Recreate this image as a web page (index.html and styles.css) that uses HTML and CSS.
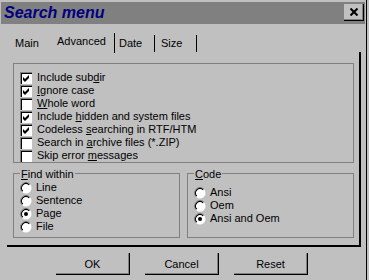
FILE: index.html
```html
<!DOCTYPE html>
<html lang="en">
<head>
    <meta charset="UTF-8">
    <title>Search menu</title>
    <link rel="stylesheet" href="styles.css">
</head>
<body>
    <div class="window">
        <div class="titlebar">
            <span class="title">Search menu</span>
            <span class="close">
                <svg width="8" height="8" viewBox="0 0 8 8"><path d="M0.5 0.5 L7.5 7.5 M7.5 0.5 L0.5 7.5" stroke="#000" stroke-width="2"/></svg>
            </span>
        </div>

        <div class="tabs">
            <span class="tab">Main</span>
            <span class="tab active">Advanced</span>
            <span class="tab">Date</span>
            <span class="tab">Size</span>
        </div>

        <div class="page">
            <div class="group options">
                <label class="check on"><span class="box"></span><span>Include sub<u>d</u>ir</span></label>
                <label class="check on"><span class="box"></span><span><u>I</u>gnore case</span></label>
                <label class="check"><span class="box"></span><span><u>W</u>hole word</span></label>
                <label class="check on"><span class="box"></span><span>Include <u>h</u>idden and system files</span></label>
                <label class="check on"><span class="box"></span><span>Codeless <u>s</u>earching in RTF/HTM</span></label>
                <label class="check"><span class="box"></span><span>Search in <u>a</u>rchive files (*.ZIP)</span></label>
                <label class="check"><span class="box"></span><span>Skip error <u>m</u>essages</span></label>
            </div>

            <div class="group-row">
                <fieldset class="radio-group find">
                    <legend><u>F</u>ind within</legend>
                    <label class="radio"><span class="dot"></span><span>Line</span></label>
                    <label class="radio"><span class="dot"></span><span>Sentence</span></label>
                    <label class="radio on"><span class="dot"></span><span>Page</span></label>
                    <label class="radio"><span class="dot"></span><span>File</span></label>
                </fieldset>
                <fieldset class="radio-group code">
                    <legend><u>C</u>ode</legend>
                    <label class="radio"><span class="dot"></span><span>Ansi</span></label>
                    <label class="radio"><span class="dot"></span><span>Oem</span></label>
                    <label class="radio on"><span class="dot"></span><span>Ansi and Oem</span></label>
                </fieldset>
            </div>
        </div>

        <div class="buttons">
            <button>OK</button>
            <button>Cancel</button>
            <button>Reset</button>
        </div>
    </div>

    <script>
        // draw the check marks and radio circles once
        var tick = '<svg width="12" height="12" viewBox="0 0 12 12"><polygon points="2,4 4,6 8,2 8,5 4,9 2,7" fill="#000"/></svg>';
        document.querySelectorAll('.check.on .box').forEach(function (el) {
            el.innerHTML = tick;
        });

        document.querySelectorAll('.radio .dot').forEach(function (el) {
            var on = el.parentNode.classList.contains('on');
            el.innerHTML =
                '<svg width="12" height="12" viewBox="0 0 12 12">' +
                '<circle cx="6" cy="6" r="5.5" fill="#fff"/>' +
                '<path d="M2.1 9.9 A5.5 5.5 0 0 1 9.9 2.1" fill="none" stroke="#808080" stroke-width="1"/>' +
                '<path d="M2.8 9.2 A4.5 4.5 0 0 1 9.2 2.8" fill="none" stroke="#000" stroke-width="1.2"/>' +
                (on ? '<circle cx="6" cy="6" r="2" fill="#000"/>' : '') +
                '</svg>';
        });
    </script>
</body>
</html>
```

FILE: styles.css
```css
* {
    box-sizing: border-box;
}
body {
    margin: 0;
    background: #c0c0c0;
    font-family: "Liberation Sans", Arial, sans-serif;
    font-size: 11px;
    color: #000;
}
.window {
    width: 367px;
    height: 280px;
    padding: 2px 1px 0 1px;
    border-right: 1px solid #000;
}
.titlebar {
    display: flex;
    justify-content: space-between;
    align-items: flex-start;
    width: 364px;
    height: 22px;
    background: #808080;
}
.title {
    padding-left: 3px;
    line-height: 22px;
    font-size: 16px;
    font-weight: bold;
    font-style: italic;
    color: #000080;
}
.close {
    display: flex;
    align-items: center;
    justify-content: center;
    width: 20px;
    height: 17px;
    margin: 2px 1px 0 0;
    border-right: 1px solid #000;
    border-bottom: 1px solid #000;
    box-shadow: inset -1px -1px 0 #808080;
    background: #c0c0c0;
}

.tabs {
    display: flex;
    align-items: flex-end;
    height: 28px;
    padding-left: 8px;
}
.tab {
    min-width: 42px;
    height: 17px;
    padding: 2px 6px 0;
    line-height: 13px;
    border-right: 1px solid #000;
}
.tab.active {
    height: 20px;
    margin: 0 -2px -1px;
    padding: 2px 8px 0;
    background: #c0c0c0;
}

.page {
    width: 354px;
    height: 195px;
    margin-left: 6px;
    padding: 11px 5px 0 6px;
    border-right: 2px solid #000;
    border-bottom: 2px solid #000;
}
.group {
    border: 1px solid #808080;
}
.options {
    height: 100px;
    padding: 7px 0 0 6px;
}
.check, .radio {
    display: flex;
    align-items: center;
    height: 13px;
    line-height: 13px;
    white-space: nowrap;
}
.box {
    width: 12px;
    height: 12px;
    margin-right: 5px;
    background: #fff;
    border-top: 1px solid #808080;
    border-left: 1px solid #808080;
    box-shadow: inset 1px 1px 0 #000;
}
.box svg {
    display: block;
}
.dot {
    width: 12px;
    height: 12px;
    margin-right: 4px;
}
.dot svg {
    display: block;
}

.group-row {
    display: flex;
    gap: 7px;
    margin-top: 2px;
}
.radio-group {
    width: 167px;
    height: 73px;
    margin: 0;
    padding: 0 0 0 6px;
    border: 1px solid #808080;
}
.radio-group legend {
    padding: 3px 1px 0;
    line-height: 13px;
}
.radio-group.code .radio:first-of-type {
    margin-top: 5px;
}

.buttons {
    display: flex;
    gap: 15px;
    margin: 6px 0 0 55px;
}
button {
    width: 74px;
    height: 22px;
    padding: 0;
    border: none;
    border-right: 1px solid #000;
    border-bottom: 1px solid #000;
    box-shadow: inset -1px -1px 0 #808080;
    background: #c0c0c0;
    font-family: inherit;
    font-size: 11px;
    color: #000;
}
```
